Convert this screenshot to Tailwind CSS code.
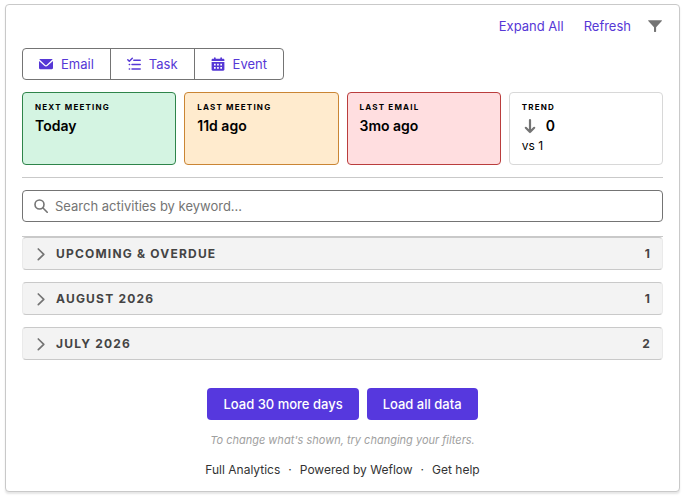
<!DOCTYPE html>
<html lang="en">
<head>
<meta charset="utf-8">
<meta name="viewport" content="width=device-width, initial-scale=1">
<title>Activity Timeline</title>
<script src="https://cdn.jsdelivr.net/npm/@tailwindcss/browser@4"></script>
</head>
<body class="bg-white font-['Inter',sans-serif] text-[13px] leading-5 text-black">
<main class="mt-1 mr-1.5 mb-1.5 ml-[5px] rounded border border-[#c9c9c9] bg-white px-4 pb-[11px] shadow-[0_2px_2px_rgba(0,0,0,0.1)]">
  <nav class="flex h-[43px] items-center justify-end gap-5 pb-0.5 text-[#5638d6]" aria-label="Timeline actions">
    <button type="button">Expand All</button>
    <button type="button">Refresh</button>
    <button type="button" aria-label="Filter" class="-ml-1 w-4 text-[#747474]">
      <svg class="size-4" viewBox="0 0 16 16" fill="currentColor"><path d="M1.600 2.200h12.900c.4 0 .6.400.3.700L9.100 9.300v4.300c0 .3-.2.500-.5.500H7.500c-.3 0-.5-.2-.5-.5V9.300L1.300 2.900c-.3-.3-.1-.7.3-.7z"/></svg>
    </button>
  </nav>

  <div class="flex">
    <div class="flex h-8 divide-x divide-[#747474] rounded border border-[#747474] text-[#5638d6]">
      <button type="button" class="flex items-center gap-2 px-4">
        <svg class="size-3.5" viewBox="0 0 14 14" fill="currentColor"><path d="M.8 2h12.400c.3 0 .5.300.2.600L7.600 7.900c-.4.400-.9.400-1.300 0L.5 2.600C.3 2.300.5 2 .8 2zM0 3.900l5.300 4.900c1 .9 2.300.900 3.300 0L14 3.900V11c0 .7-.5 1.200-1.200 1.200H1.200C.5 12.200 0 11.700 0 11z"/></svg>
        Email
      </button>
      <button type="button" class="flex items-center gap-2 px-4">
        <svg class="size-3.5" viewBox="0 0 14 14" fill="none" stroke="currentColor" stroke-width="1.500" stroke-linecap="round" stroke-linejoin="round"><path d="M.8 2.800l1.500 1.500 3-3M6.800 3.300h6.400M5 7.500h8.200M5 12h8.200M2.300 7.500h.3M2.300 12h.3"/></svg>
        Task
      </button>
      <button type="button" class="flex items-center gap-2 px-4">
        <svg class="size-3.5" viewBox="0 0 14 14" fill="currentColor"><path fill-rule="evenodd" d="M1.800 1.700H3V1c0-.9 1.700-.9 1.700 0v.7h4.600V1c0-.9 1.700-.9 1.700 0v.7h1.200c.7 0 1.200.5 1.200 1.200v1H.6v-1c0-.7.5-1.200 1.200-1.200zM.6 5h12.800v7.600c0 .7-.5 1.200-1.200 1.200H1.800c-.7 0-1.200-.5-1.200-1.200zM3 6.700v1.700h1.700V6.700zm3.100 0v1.700h1.700V6.700zm3.200 0v1.700H11V6.700zM3 10v1.700h1.700V10zm3.100 0v1.700h1.700V10zm3.200 0v1.700H11V10z"/></svg>
        Event
      </button>
    </div>
  </div>

  <section class="mt-3 grid grid-cols-4 gap-2 border-b border-[#c9c9c9] pb-3" aria-label="Summary">
    <div class="min-h-[73px] rounded border border-[#2e844a] bg-[#d4f4e2] px-3 pt-2">
      <h2 class="text-[8px] leading-3 font-bold tracking-[0.15em]">NEXT MEETING</h2>
      <p class="mt-[3px] text-sm leading-5 font-semibold">Today</p>
    </div>
    <div class="min-h-[73px] rounded border border-[#ca8534] bg-[#ffebce] px-3 pt-2">
      <h2 class="text-[8px] leading-3 font-bold tracking-[0.15em]">LAST MEETING</h2>
      <p class="mt-[3px] text-sm leading-5 font-semibold">11d ago</p>
    </div>
    <div class="min-h-[73px] rounded border border-[#ba3d3d] bg-[#ffdee0] px-3 pt-2">
      <h2 class="text-[8px] leading-3 font-bold tracking-[0.15em]">LAST EMAIL</h2>
      <p class="mt-[3px] text-sm leading-5 font-semibold">3mo ago</p>
    </div>
    <div class="min-h-[73px] rounded border border-[#d8d8d8] bg-white px-3 pt-2">
      <h2 class="text-[8px] leading-3 font-bold tracking-[0.15em]">TREND</h2>
      <p class="mt-[3px] flex items-center gap-2 text-sm leading-5 font-semibold">
        <svg class="size-4" viewBox="0 0 16 16" fill="none" stroke="#747474" stroke-width="2.200" stroke-linecap="round" stroke-linejoin="round" aria-hidden="true"><path d="M8 2v12M3.800 9.800L8 14l4.200-4.200"/></svg>
        0
      </p>
      <p class="text-xs leading-5">vs 1</p>
    </div>
  </section>

  <label class="mt-3 flex h-8 items-center gap-[7px] rounded border border-[#747474] px-[11px]">
    <svg class="size-3.5 shrink-0" viewBox="0 0 14 14" fill="none" stroke="#747474" stroke-width="1.600" stroke-linecap="round" aria-hidden="true"><circle cx="5.500" cy="5.500" r="4.500"/><path d="M9 9l4.200 4.200"/></svg>
    <input type="search" aria-label="Search activities" placeholder="Search activities by keyword…" class="min-w-0 flex-1 bg-transparent outline-none placeholder:text-[#747474]">
  </label>

  <div class="mt-3.5 flex flex-col gap-3 border-t border-[#c9c9c9] font-bold text-[#444]">
    <button type="button" class="flex h-[33px] items-center gap-2 rounded border border-x-[#eaeaea] border-y-[#c9c9c9] bg-[#f3f3f3] px-[11px] text-left text-xs tracking-widest">
      <svg class="size-3.5" viewBox="0 0 14 14" fill="none" stroke="#747474" stroke-width="1.700" stroke-linecap="round" stroke-linejoin="round"><path d="M4.300 2l5.500 5.300-5.500 5.300"/></svg>
      <span class="flex-1">UPCOMING &amp; OVERDUE</span><span>1</span>
    </button>
    <button type="button" class="flex h-[33px] items-center gap-2 rounded border border-x-[#eaeaea] border-y-[#c9c9c9] bg-[#f3f3f3] px-[11px] text-left text-xs tracking-widest">
      <svg class="size-3.5" viewBox="0 0 14 14" fill="none" stroke="#747474" stroke-width="1.700" stroke-linecap="round" stroke-linejoin="round"><path d="M4.300 2l5.500 5.300-5.500 5.300"/></svg>
      <span class="flex-1">AUGUST 2026</span><span>1</span>
    </button>
    <button type="button" class="flex h-[33px] items-center gap-2 rounded border border-x-[#eaeaea] border-y-[#c9c9c9] bg-[#f3f3f3] px-[11px] text-left text-xs tracking-widest">
      <svg class="size-3.5" viewBox="0 0 14 14" fill="none" stroke="#747474" stroke-width="1.700" stroke-linecap="round" stroke-linejoin="round"><path d="M4.300 2l5.500 5.300-5.500 5.300"/></svg>
      <span class="flex-1">JULY 2026</span><span>2</span>
    </button>
  </div>

  <div class="mt-7 flex justify-center gap-2 font-medium text-white">
    <button type="button" class="h-8 rounded bg-[#5638de] px-4">Load 30 more days</button>
    <button type="button" class="h-8 rounded bg-[#5638de] px-4">Load all data</button>
  </div>
  <p class="mt-2.5 text-center text-[11px] leading-5 text-[#a0a0a0] italic">To change what's shown, try changing your filters.</p>
  <footer class="mt-2.5 flex justify-center gap-2 text-xs leading-5 text-[#333]">
    <a href="#">Full Analytics</a><span>·</span><a href="#">Powered by Weflow</a><span>·</span><a href="#">Get help</a>
  </footer>
</main>
</body>
</html>
